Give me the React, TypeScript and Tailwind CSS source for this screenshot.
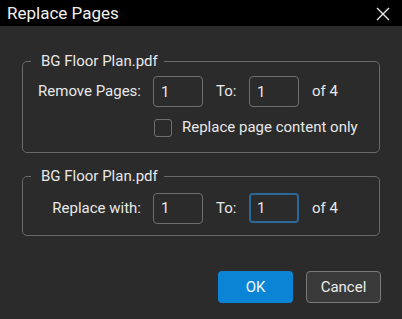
import React from "react";

const inputCls =
  "w-[50px] h-[31px] bg-transparent rounded-[4px] border border-[#6e6e6e] pl-[7px] text-[15px] text-[#e8e8e8] outline-none";

export default function App() {
  return (
    <div
      className="w-[402px] h-[319px] bg-[#2b2b2b] text-[#e8e8e8] flex flex-col overflow-hidden"
      style={{ fontFamily: "Roboto, 'Noto Sans', sans-serif" }}
    >
      <div className="h-[26px] bg-black flex items-center justify-between pl-[7px] pr-[12px] shrink-0">
        <span className="text-[17px] leading-none text-[#f0f0f0]">Replace Pages</span>
        <svg width="14" height="14" viewBox="0 0 14 14" className="mt-[1px]">
          <path d="M1 1L13 13M13 1L1 13" stroke="#e8e8e8" strokeWidth="1.4" />
        </svg>
      </div>

      <div className="px-[22px] pt-[25px]">
        <fieldset className="border border-[#6a6a6a] rounded-[5px] pb-[15px]">
          <legend className="ml-[8px] pl-[10px] pr-[6px] text-[15px] leading-[20px]">
            BG Floor Plan.pdf
          </legend>
          <div className="flex items-center h-[31px] mt-[5px] text-[15px]">
            <span className="w-[118px] text-right">Remove Pages:</span>
            <input className={inputCls + " ml-[12px]"} defaultValue="1" readOnly />
            <span className="ml-[13px] w-[33px]">To:</span>
            <input className={inputCls} defaultValue="1" readOnly />
            <span className="ml-[13px]">of 4</span>
          </div>
          <div className="flex items-center h-[19px] mt-[11px] text-[15px]">
            <span className="ml-[131px] w-[18px] h-[18px] rounded-[3px] border border-[#6e6e6e]" />
            <span className="ml-[10px]">Replace page content only</span>
          </div>
        </fieldset>

        <fieldset className="border border-[#6a6a6a] rounded-[5px] pb-[12px] mt-[13px]">
          <legend className="ml-[8px] pl-[10px] pr-[6px] text-[15px] leading-[20px]">
            BG Floor Plan.pdf
          </legend>
          <div className="flex items-center h-[30px] mt-[7px] text-[15px]">
            <span className="w-[118px] text-right">Replace with:</span>
            <input className={inputCls + " ml-[12px] h-[30px]"} defaultValue="1" readOnly />
            <span className="ml-[13px] w-[33px]">To:</span>
            <input
              className="w-[50px] h-[30px] bg-transparent rounded-[4px] border-2 border-[#2a6896] pl-[6px] text-[15px] text-[#e8e8e8] outline-none"
              defaultValue="1"
              readOnly
            />
            <span className="ml-[13px]">of 4</span>
          </div>
        </fieldset>
      </div>

      <div className="flex justify-end gap-[13px] pr-[21px] mt-[35px]">
        <button className="w-[75px] h-[32px] rounded-[4px] bg-[#0b84d6] text-[15px] text-[#f2f8ff]">
          OK
        </button>
        <button className="w-[75px] h-[32px] rounded-[4px] bg-[#3a3a3a] border border-[#7a7a7a] text-[15px] text-[#ececec]">
          Cancel
        </button>
      </div>
    </div>
  );
}
